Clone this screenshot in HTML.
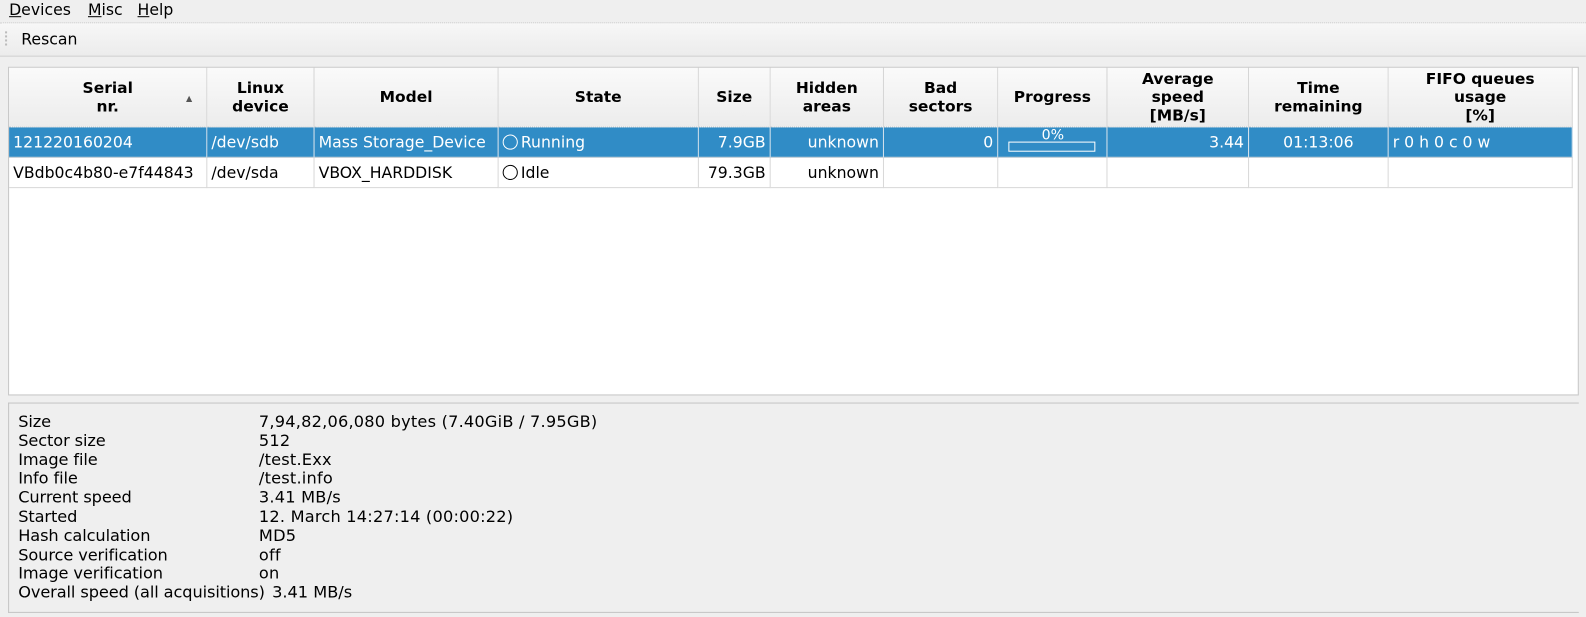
<!DOCTYPE html><html><head><style>
body{margin:0;width:1586px;height:616px;background:#efefef;font-family:"DejaVu Sans","Liberation Sans",sans-serif;position:relative;overflow:hidden;color:#000}
#w{position:absolute;left:0;top:0;width:1568px;height:610px;transform:scale(1.0114);transform-origin:0 0}
.a{position:absolute;white-space:nowrap}
.menu{font-size:15.5px;top:1px}
.tb{position:absolute;left:0;top:22px;width:1568px;height:32px;border-top:1px dotted #d0d0d0;border-bottom:1px solid #cfcfcf;background:linear-gradient(#f7f7f7,#ececec)}
.tbl{position:absolute;left:8px;top:66px;width:1553px;height:325px;background:#fff;border:1px solid #c4c4c4;box-sizing:border-box}
.hd{position:absolute;top:0;height:59px;background:linear-gradient(#fafafa,#ececec);border-right:1px solid #d3d3d3;border-bottom:1px dotted #c8c8c8;box-sizing:border-box;display:flex;align-items:center;justify-content:center;text-align:center;font-weight:bold;font-size:15.3px;line-height:18px}
.c{position:absolute;height:30px;line-height:30px;border-right:1px solid #d8d8d8;border-bottom:1px solid #d8d8d8;box-sizing:border-box;font-size:15.5px;padding:0 4px;overflow:hidden;white-space:nowrap}
.sel{background:#308cc6;color:#fff;border-right-color:#dde6ee}
.r{text-align:right}.m{text-align:center}
.circ{display:inline-block;width:13px;height:13px;border:1px solid #000;border-radius:50%;vertical-align:-2px;margin-right:3px;background:#fff}
.det{position:absolute;left:8px;top:398px;width:1553px;height:208px;border:1px solid #c4c4c4;border-right:none;box-sizing:border-box;font-size:16px;line-height:18.8px}
</style></head><body><div id="w">
<div class="a menu" style="left:9px"><u>D</u>evices</div>
<div class="a menu" style="left:87px"><u>M</u>isc</div>
<div class="a menu" style="left:136px"><u>H</u>elp</div>
<div class="tb"><div class="a" style="left:5px;top:8px;width:2px;height:14px;border-left:2px dotted #bbb"></div><div class="a" style="left:21px;top:7px;font-size:15.5px">Rescan</div></div>
<div class="tbl">
<div class="hd" style="left:0;width:196px">Serial<br>nr.<span style="position:absolute;right:14px;top:22px;font-size:8px;color:#555">▲</span></div>
<div class="hd" style="left:196px;width:106px">Linux<br>device</div>
<div class="hd" style="left:302px;width:182px">Model</div>
<div class="hd" style="left:484px;width:198px">State</div>
<div class="hd" style="left:682px;width:71px">Size</div>
<div class="hd" style="left:753px;width:112px">Hidden<br>areas</div>
<div class="hd" style="left:865px;width:113px">Bad<br>sectors</div>
<div class="hd" style="left:978px;width:108px">Progress</div>
<div class="hd" style="left:1086px;width:140px">Average<br>speed<br>[MB/s]</div>
<div class="hd" style="left:1226px;width:138px">Time<br>remaining</div>
<div class="hd" style="left:1364px;width:182px">FIFO queues<br>usage<br>[%]</div>

<div class="c sel" style="top:59px;left:0;width:196px">121220160204</div>
<div class="c sel" style="top:59px;left:196px;width:106px">/dev/sdb</div>
<div class="c sel" style="top:59px;left:302px;width:182px">Mass Storage_Device</div>
<div class="c sel" style="top:59px;left:484px;width:198px"><span class="circ" style="border-color:#fff;background:none"></span>Running</div>
<div class="c sel r" style="top:59px;left:682px;width:71px">7.9GB</div>
<div class="c sel r" style="top:59px;left:753px;width:112px">unknown</div>
<div class="c sel r" style="top:59px;left:865px;width:113px">0</div>
<div class="c sel" style="top:59px;left:978px;width:108px"><div style="position:absolute;left:10px;top:14px;width:86px;height:10px;border:1px solid #fff;box-sizing:border-box"></div><div style="position:absolute;left:0;width:108px;top:-7px;text-align:center;font-size:14px">0%</div></div>
<div class="c sel r" style="top:59px;left:1086px;width:140px">3.44</div>
<div class="c sel m" style="top:59px;left:1226px;width:138px">01:13:06</div>
<div class="c sel" style="top:59px;left:1364px;width:182px">r 0 h 0 c 0 w</div>

<div class="c" style="top:89px;left:0;width:196px">VBdb0c4b80-e7f44843</div>
<div class="c" style="top:89px;left:196px;width:106px">/dev/sda</div>
<div class="c" style="top:89px;left:302px;width:182px">VBOX_HARDDISK</div>
<div class="c" style="top:89px;left:484px;width:198px"><span class="circ"></span>Idle</div>
<div class="c r" style="top:89px;left:682px;width:71px">79.3GB</div>
<div class="c r" style="top:89px;left:753px;width:112px">unknown</div>
<div class="c" style="top:89px;left:865px;width:113px"></div>
<div class="c" style="top:89px;left:978px;width:108px"></div>
<div class="c" style="top:89px;left:1086px;width:140px"></div>
<div class="c" style="top:89px;left:1226px;width:138px"></div>
<div class="c" style="top:89px;left:1364px;width:182px"></div>
</div>
<div class="det">
<div class="a" style="left:9px;top:9px;letter-spacing:-0.1px">Size<br>Sector size<br>Image file<br>Info file<br>Current speed<br>Started<br>Hash calculation<br>Source verification<br>Image verification<br>Overall speed (all acquisitions)</div>
<div class="a" style="left:247px;top:9px;letter-spacing:0.2px">7,94,82,06,080 bytes (7.40GiB / 7.95GB)<br>512<br>/test.Exx<br>/test.info<br>3.41 MB/s<br>12. March 14:27:14 (00:00:22)<br>MD5<br>off<br>on</div>
<div class="a" style="left:260px;top:178px">3.41 MB/s</div>
</div>
</div></body></html>
